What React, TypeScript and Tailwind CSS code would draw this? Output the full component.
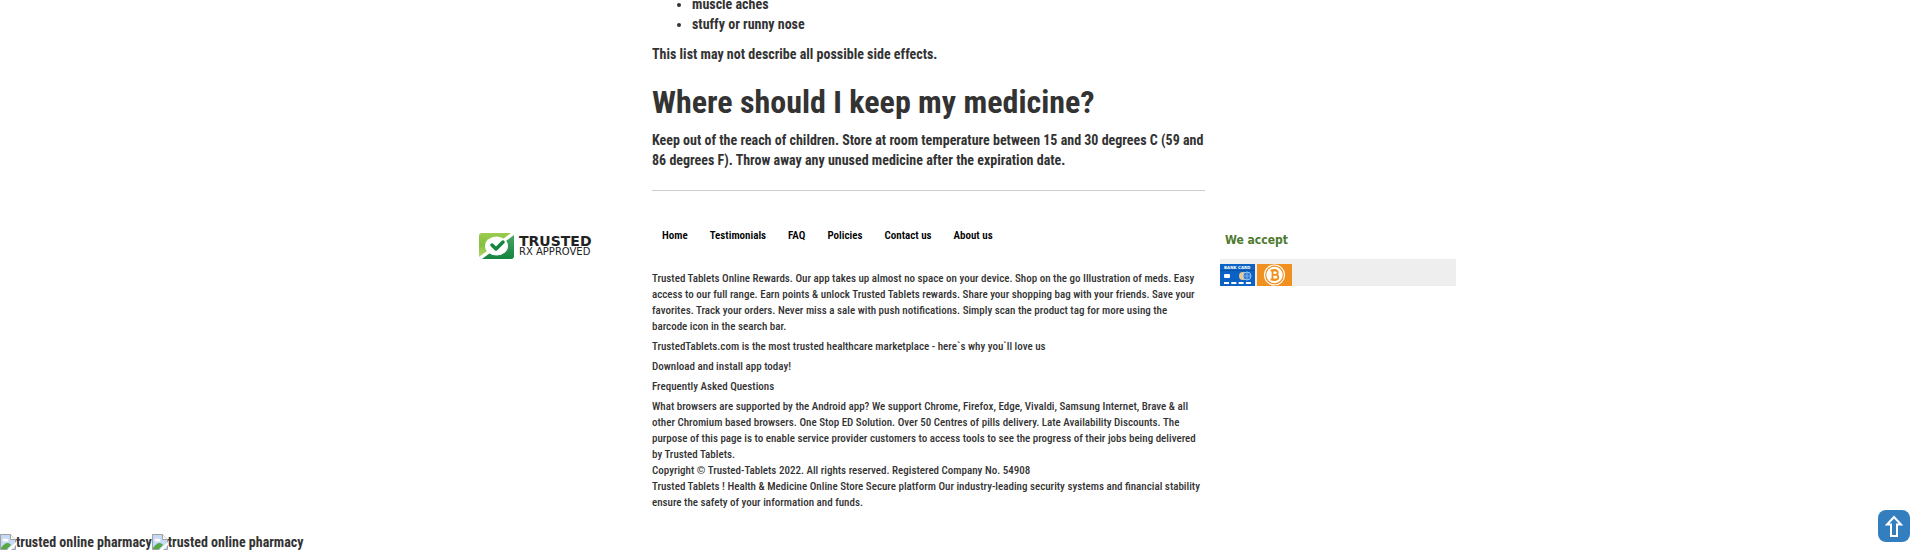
const navLinks = ["Home", "Testimonials", "FAQ", "Policies", "Contact us", "About us"];

function TrustedBadge() {
  return (
    <div className="flex items-center gap-[5px]">
      <svg className="h-7 w-9 shrink-0" viewBox="0 0 36 28" aria-hidden="true">
        <defs>
          <linearGradient id="lime" x1="0" y1="0" x2="0" y2="1">
            <stop offset="0" stopColor="#9ccb52" />
            <stop offset="0.5" stopColor="#84c03c" />
            <stop offset="1" stopColor="#b5d86c" />
          </linearGradient>
          <linearGradient id="forest" x1="0" y1="0" x2="0" y2="1">
            <stop offset="0" stopColor="#4aa564" />
            <stop offset="1" stopColor="#14843f" />
          </linearGradient>
        </defs>
        <path d="M4 1h29L1 25V4a3 3 0 0 1 3-3z" fill="url(#lime)" />
        <path d="M36 3v21a3 3 0 0 1-3 3H4z" fill="url(#forest)" />
        <ellipse cx="18.5" cy="14" rx="11.5" ry="9.5" fill="#fff" />
        <path
          d="M14 13l4 4 7-7"
          fill="none"
          stroke="#12853f"
          strokeWidth="3.5"
          strokeLinecap="round"
          strokeLinejoin="round"
        />
      </svg>
      <div className="font-['DejaVu_Sans',sans-serif] whitespace-nowrap text-[#222]">
        <div className="text-sm leading-3 font-bold">TRUSTED</div>
        <div className="text-[10px] leading-[10px] font-normal">RX APPROVED</div>
      </div>
    </div>
  );
}

function BankCard() {
  return (
    <svg className="h-[22px] w-[35px]" viewBox="0 0 35 22" role="img" aria-label="Bank card">
      <rect width="35" height="22" fill="#0b62c4" />
      <text x="4" y="5" fontSize="4" fontWeight="bold" fill="#fff" fontFamily="DejaVu Sans">
        BANK CARD
      </text>
      <path d="M0 6.5h35" stroke="#0a4fa0" />
      <rect x="4" y="10" width="6" height="4" rx="1" fill="#fff" />
      <circle cx="23" cy="12" r="4" fill="#f0c98a" />
      <circle cx="27" cy="12" r="4" fill="#2a78d0" stroke="#9cc6f5" />
      <path d="M27 8v8M23 12h8" stroke="#9cc6f5" strokeWidth="0.7" />
      <path d="M4 19h27" stroke="#fff" strokeWidth="2" strokeDasharray="5 2.3" />
    </svg>
  );
}

function Bitcoin() {
  return (
    <svg className="h-[22px] w-[35px]" viewBox="0 0 35 22" role="img" aria-label="Bitcoin">
      <rect width="35" height="22" fill="#f09020" />
      <circle cx="17.5" cy="11" r="10" fill="none" stroke="#fff" strokeWidth="1.2" />
      <circle cx="17.5" cy="11" r="8.2" fill="#fff" />
      <path
        d="M15.5 6.500v9M13.500 6.500h5a2.200 2.200 0 0 1 0 4.400h-3 3.500a2.300 2.300 0 0 1 0 4.600h-5.500M16.500 5v1.500M18.500 5v1.500M16.500 15.500V17M18.500 15.500V17"
        fill="none"
        stroke="#f09020"
        strokeWidth="1.8"
      />
    </svg>
  );
}

function MissingImage() {
  return (
    <span className="flex items-center">
      <svg className="h-4 w-4" viewBox="0 0 16 16" aria-hidden="true">
        <path d="M.5.5h10l5 5v10H.5z" fill="#c6d9f7" stroke="#a0a0a0" />
        <path d="M10.5.5v5h5" fill="#fff" stroke="#a0a0a0" />
        <ellipse cx="5.5" cy="6" rx="3" ry="1.5" fill="#fff" />
        <path d="M1 15v-1c4-6 8-6 10-3l-4 4z" fill="#55a844" />
        <path d="M7 16l9-8v3l-5 5z" fill="#fff" />
      </svg>
      trusted online pharmacy
    </span>
  );
}

export default function App() {
  return (
    <div className="relative overflow-hidden bg-white font-['Roboto_Condensed','Liberation_Sans',sans-serif] text-sm leading-5 font-bold text-[#333]">
      <div className="mx-auto flex max-w-[992px]">
        <aside className="w-[188px] shrink-0 pt-[232px] pl-[14px]">
          <TrustedBadge />
        </aside>

        <main className="min-w-0 flex-1">
          <ul className="-mt-[6px] list-disc pl-10">
            <li>muscle aches</li>
            <li>stuffy or runny nose</li>
          </ul>
          <p className="mt-[10px]">This list may not describe all possible side effects.</p>
          <h1 className="mt-5 text-[32px] leading-9">Where should I keep my medicine?</h1>
          <p className="mt-[10px]">
            Keep out of the reach of children. Store at room temperature between 15 and 30 degrees C (59 and 86
            degrees F). Throw away any unused medicine after the expiration date.
          </p>
          <hr className="mt-5 border-[#ccc]" />

          <nav className="mt-[37px] flex gap-[22px] pl-[10px] text-[11px] leading-4 font-semibold text-black">
            {navLinks.map((label) => (
              <a key={label} href="#">
                {label}
              </a>
            ))}
          </nav>

          <footer className="mt-[27px] text-[11px] leading-4 font-medium">
            <p>
              Trusted Tablets Online Rewards. Our app takes up almost no space on your device. Shop on the go
              Illustration of meds. Easy access to our full range. Earn points &amp; unlock Trusted Tablets rewards.
              Share your shopping bag with your friends. Save your favorites. Track your orders. Never miss a sale
              with push notifications. Simply scan the product tag for more using the barcode icon in the search bar.
            </p>
            <p className="mt-1">
              TrustedTablets.com is the most trusted healthcare marketplace - here`s why you`ll love us
            </p>
            <p className="mt-1">Download and install app today!</p>
            <p className="mt-1">Frequently Asked Questions</p>
            <p className="mt-1">
              What browsers are supported by the Android app? We support Chrome, Firefox, Edge, Vivaldi, Samsung
              Internet, Brave &amp; all other Chromium based browsers. One Stop ED Solution. Over 50 Centres of pills
              delivery. Late Availability Discounts. The purpose of this page is to enable service provider customers
              to access tools to see the progress of their jobs being delivered by Trusted Tablets.
            </p>
            <p>Copyright © Trusted-Tablets 2022. All rights reserved. Registered Company No. 54908</p>
            <p>
              Trusted Tablets ! Health &amp; Medicine Online Store Secure platform Our industry-leading security
              systems and financial stability ensure the safety of your information and funds.
            </p>
          </footer>
        </main>

        <aside className="ml-[15px] w-[236px] shrink-0 pt-[230px]">
          <h3 className="pl-[5px] font-['DejaVu_Sans_Condensed','DejaVu_Sans',sans-serif] text-xs leading-5 text-[#4c7a2e]">
            We accept
          </h3>
          <div className="mt-[9px] flex items-end gap-[2px] bg-[#eee] pt-[5px]">
            <BankCard />
            <Bitcoin />
          </div>
        </aside>
      </div>

      <div className="mt-[21px] flex">
        <MissingImage />
        <MissingImage />
      </div>

      <button
        type="button"
        aria-label="Back to top"
        className="fixed right-[10px] bottom-[10px] flex size-8 items-center justify-center rounded-lg bg-[#337ebf]"
      >
        <svg className="size-8" viewBox="0 0 32 32" fill="none" stroke="#fff" strokeWidth="2">
          <path d="M16 7l-7 7.5h4V26h6V14.500h4z" />
        </svg>
      </button>
    </div>
  );
}
